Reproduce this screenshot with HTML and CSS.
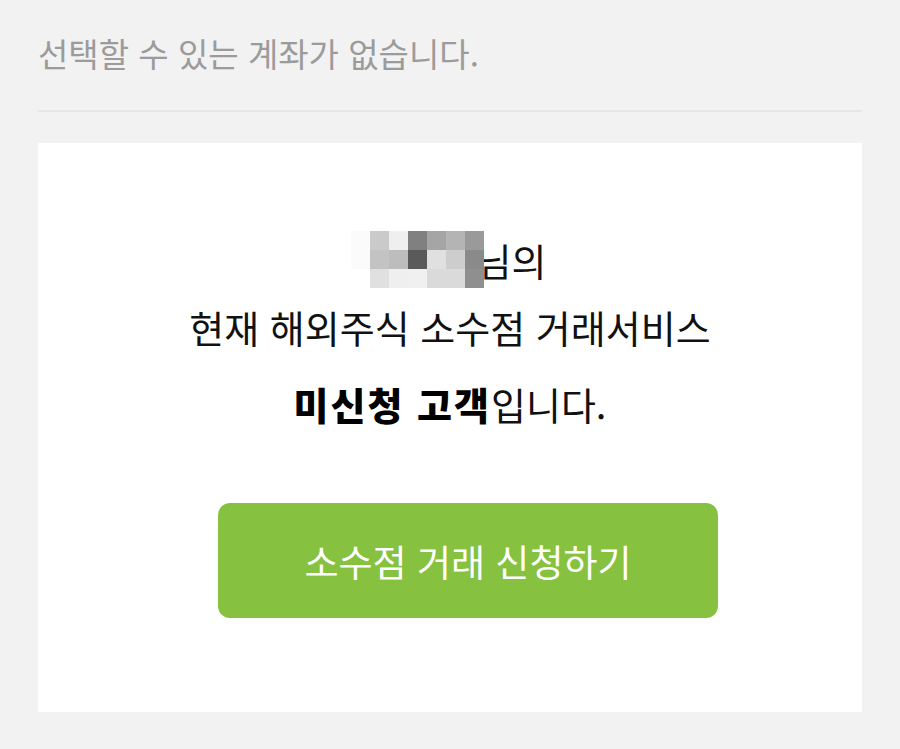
FILE: index.html
```html
<!DOCTYPE html>
<html lang="ko">
<head>
  <meta charset="UTF-8">
  <meta name="viewport" content="width=device-width, initial-scale=1.0">
  <title>소수점 거래</title>
  <link rel="stylesheet" href="styles.css">
</head>
<body>
  <div class="page">
    <p class="empty-text">선택할 수 있는 계좌가 없습니다.</p>
    <div class="divider"></div>

    <div class="card">
      <div class="message">
        <p class="line name-line">
          <span class="mosaic" aria-label="고객명">
            <i style="background:#fbfbfb"></i><i style="background:#cacaca"></i><i style="background:#efefef"></i><i style="background:#808080"></i><i style="background:#a5a5a5"></i><i style="background:#b4b4b4"></i><i style="background:#9a9a9a"></i>
            <i style="background:#fbfbfb"></i><i style="background:#c3c3c3"></i><i style="background:#bdbdbd"></i><i style="background:#5a5a5a"></i><i style="background:#e0e0e0"></i><i style="background:#cdcdcd"></i><i style="background:#8a8a8a"></i>
            <i style="background:#ffffff"></i><i style="background:#e0e0e0"></i><i style="background:#efefef"></i><i style="background:#f0f0f0"></i><i style="background:#dadada"></i><i style="background:#dadada"></i><i style="background:#8f8f8f"></i>
          </span><span class="suffix">님의</span>
        </p>
        <p class="line service-line">현재 해외주식 소수점 거래서비스</p>
        <p class="line status-line"><strong>미신청 고객</strong>입니다.</p>
      </div>

      <button class="apply-btn">소수점 거래 신청하기</button>
    </div>
  </div>
</body>
</html>
```

FILE: styles.css
```css
:root {
  --bg-color: #f2f2f2;
  --card-bg: #ffffff;
  --text-color: #111111;
  --muted-text: #9b9b9b;
  --divider: #e6e6e6;
  --primary-color: #86c23f;
}

* {
  margin: 0;
  padding: 0;
  box-sizing: border-box;
}

body {
  font-family: "Noto Sans CJK KR", "Noto Sans", sans-serif;
  background-color: var(--bg-color);
  color: var(--text-color);
}

.page {
  padding: 0 38px;
}

.empty-text {
  font-size: 33px;
  line-height: 44px;
  padding-top: 31px;
  color: var(--muted-text);
}

.divider {
  height: 2px;
  background-color: var(--divider);
  margin-top: 35px;
}

.card {
  background-color: var(--card-bg);
  margin-top: 31px;
  height: 569px;
  padding-top: 88px;
  display: flex;
  flex-direction: column;
  align-items: center;
}

.message {
  display: flex;
  flex-direction: column;
  align-items: center;
}

.line {
  font-size: 38px;
  line-height: 50px;
  color: var(--text-color);
}

.service-line {
  margin-top: 14px;
}

.status-line {
  margin-top: 27px;
}

.line strong {
  font-weight: 900;
  letter-spacing: 2px;
  color: #000;
}

.name-line {
  display: flex;
  align-items: center;
  height: 57px;
  margin-left: -3px;
}

/* 이름 모자이크 */
.mosaic {
  display: grid;
  grid-template-columns: repeat(7, 19px);
  grid-auto-rows: 19px;
  margin-right: -7px;
  position: relative;
  z-index: 1;
}

.mosaic i {
  display: block;
}

.apply-btn {
  margin-top: 74px;
  margin-left: 36px;
  width: 500px;
  height: 115px;
  border: none;
  border-radius: 12px;
  background-color: var(--primary-color);
  color: #ffffff;
  font-family: inherit;
  font-size: 37px;
  cursor: pointer;
}
```
